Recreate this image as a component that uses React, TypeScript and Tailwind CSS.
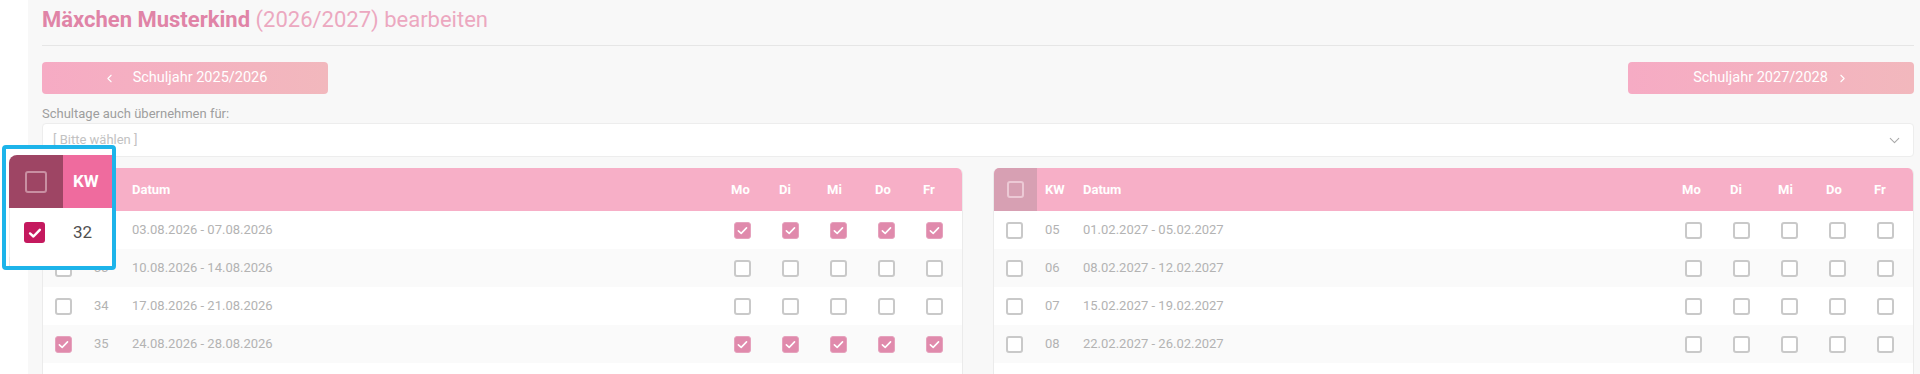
import React from "react";
import { ChevronLeft, ChevronRight, ChevronDown } from "lucide-react";

type Row = { kw: string; date: string; checked: boolean };

const leftRows: Row[] = [
  { kw: "32", date: "03.08.2026 - 07.08.2026", checked: true },
  { kw: "33", date: "10.08.2026 - 14.08.2026", checked: false },
  { kw: "34", date: "17.08.2026 - 21.08.2026", checked: false },
  { kw: "35", date: "24.08.2026 - 28.08.2026", checked: true },
];

const rightRows: Row[] = [
  { kw: "05", date: "01.02.2027 - 05.02.2027", checked: false },
  { kw: "06", date: "08.02.2027 - 12.02.2027", checked: false },
  { kw: "07", date: "15.02.2027 - 19.02.2027", checked: false },
  { kw: "08", date: "22.02.2027 - 26.02.2027", checked: false },
];

const days = ["Mo", "Di", "Mi", "Do", "Fr"];

function Check({ className, w = 1.7 }: { className?: string; w?: number }) {
  return (
    <svg viewBox="0 0 16 16" className={className} fill="none">
      <path d="M3.6 8.4 L6.6 11.1 L12.3 5.2" stroke="white" strokeWidth={w} strokeLinecap="round" strokeLinejoin="round" />
    </svg>
  );
}

function Cb({ checked }: { checked: boolean }) {
  if (checked) {
    return (
      <span className="flex h-[17px] w-[17px] items-center justify-center rounded-[3px] border border-[#e6a2bd] bg-[#e08aac]">
        <Check className="h-[15px] w-[15px]" />
      </span>
    );
  }
  return <span className="block h-[17px] w-[17px] rounded-[3px] border-2 border-[#c9c9c9] bg-white" />;
}

function Table({ rows }: { rows: Row[] }) {
  return (
    <div className="overflow-hidden rounded-t-[6px] border-x border-[#ebebeb] bg-white">
      <div className="flex h-[43px] items-center bg-[#f7afc7] text-[13px] font-bold text-white">
        <div className="flex h-full w-[43px] shrink-0 items-center bg-[#d7a0b3] pl-[13px]">
          <span className="block h-[17px] w-[17px] rounded-[3px] border-2 border-[#ecc9d5]" />
        </div>
        <div className="w-[38px] shrink-0 pl-[8px]">KW</div>
        <div className="flex-1 pl-[8px]">Datum</div>
        {days.map((d) => (
          <div key={d} className="w-[48px] shrink-0 pl-[9px]">
            {d}
          </div>
        ))}
      </div>
      {rows.map((r, i) => (
        <div
          key={r.kw}
          className={`flex h-[38px] items-center text-[13px] text-[#b3b3b3] ${i % 2 === 1 ? "bg-[#fafafa]" : "bg-white"}`}
        >
          <div className="w-[43px] shrink-0 pl-[12px]">
            <Cb checked={r.checked} />
          </div>
          <div className="w-[38px] shrink-0 pl-[8px]">{r.kw}</div>
          <div className="flex-1 pl-[8px]">{r.date}</div>
          {days.map((d) => (
            <div key={d} className="w-[48px] shrink-0 pl-[12px]">
              <Cb checked={r.checked} />
            </div>
          ))}
        </div>
      ))}
      <div className="h-[30px] bg-white" />
    </div>
  );
}

export default function App() {
  return (
    <div className="relative flex min-h-[374px] bg-[#f8f8f8] font-['Roboto',sans-serif]">
      <div className="w-[28px] shrink-0 bg-white" />
      <div className="min-w-0 flex-1 pl-[14px] pr-[6px]">
        <h1 className="pt-[8px] text-[22px] leading-[24px] text-[#eca8c0]">
          <span className="font-bold text-[#e084a7]">Mäxchen Musterkind</span>{" "}
          <span className="font-normal">(2026/2027) bearbeiten</span>
        </h1>
        <div className="mt-[13px] h-px bg-[#e6e6e6]" />

        <div className="mt-[16px] flex justify-between">
          <button className="flex h-[32px] w-[286px] items-center justify-center gap-[17px] rounded-[4px] bg-gradient-to-r from-[#f6abc4] to-[#f2b8bd] text-[14.5px] font-normal text-white">
            <ChevronLeft size={13} strokeWidth={2} />
            <span>Schuljahr 2025/2026</span>
          </button>
          <button className="flex h-[32px] w-[286px] items-center justify-center gap-[8px] rounded-[4px] bg-gradient-to-r from-[#f6abc4] to-[#f2b8bd] text-[14.5px] font-normal text-white">
            <span>Schuljahr 2027/2028</span>
            <ChevronRight size={13} strokeWidth={2} />
          </button>
        </div>

        <div className="mt-[12px] text-[13px] leading-[16px] text-[#9e9e9e]">Schultage auch übernehmen für:</div>
        <div className="mt-[1px] flex h-[34px] items-center justify-between rounded-[4px] border border-[#ededed] bg-white pl-[10px] pr-[10px]">
          <span className="text-[13px] text-[#c2c2c2]">[ Bitte wählen ]</span>
          <ChevronDown size={17} strokeWidth={1.5} className="text-[#a9a9a9]" />
        </div>

        <div className="mt-[11px] grid grid-cols-2 gap-[30px]">
          <Table rows={leftRows} />
          <Table rows={rightRows} />
        </div>
      </div>

      {/* callout magnifier overlay */}
      <div className="absolute left-[2px] top-[145px] h-[125px] w-[114px] overflow-hidden rounded-[4px] border-4 border-[#1db4ea] bg-white">
        <div className="ml-[3px] mt-[6px] flex h-[53px]">
          <div className="flex w-[54px] shrink-0 items-center rounded-tl-[8px] bg-[#9e4564] pl-[16px]">
            <span className="block h-[22px] w-[22px] rounded-[3px] border-2 border-[#c98fa2]" />
          </div>
          <div className="flex flex-1 items-center bg-[#ef6b9e] pl-[10px] text-[17px] font-bold text-white">KW</div>
        </div>
        <div className="ml-[3px] flex h-[49px] items-center border-l border-[#eeeeee]">
          <div className="w-[53px] shrink-0 pl-[14px]">
            <span className="flex h-[21px] w-[21px] items-center justify-center rounded-[3px] bg-[#c4195e]">
              <Check className="h-[18px] w-[18px]" w={2.2} />
            </span>
          </div>
          <div className="pl-[10px] text-[17px] font-normal text-[#505050]">32</div>
        </div>
        <div className="ml-[3px] h-[20px] border-l border-[#e6e6e6]" />
      </div>
    </div>
  );
}
